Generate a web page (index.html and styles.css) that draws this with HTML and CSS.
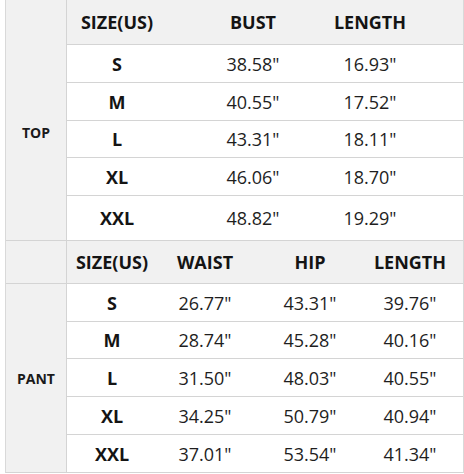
FILE: index.html
```html
<!DOCTYPE html>
<html>
<head>
<meta charset="utf-8">
<link rel="stylesheet" href="styles.css">
</head>
<body>
<div class="chart">
  <section class="sec">
    <div class="side side-top"><span class="side-label">TOP</span></div>
    <div class="rows">
      <div class="row top-cols head h45"><span>SIZE(US)</span><span>BUST</span><span>LENGTH</span></div>
      <div class="row top-cols h38"><span class="b">S</span><span>38.58"</span><span>16.93"</span></div>
      <div class="row top-cols h38"><span class="b">M</span><span>40.55"</span><span>17.52"</span></div>
      <div class="row top-cols h37"><span class="b">L</span><span>43.31"</span><span>18.11"</span></div>
      <div class="row top-cols h38"><span class="b">XL</span><span>46.06"</span><span>18.70"</span></div>
      <div class="row top-cols h44"><span class="b">XXL</span><span>48.82"</span><span>19.29"</span></div>
    </div>
  </section>
  <section class="sec">
    <div class="side side-pant">
      <div class="side-head"></div>
      <div class="side-body"><span class="side-label">PANT</span></div>
    </div>
    <div class="rows">
      <div class="row pant-cols head h43"><span>SIZE(US)</span><span>WAIST</span><span>HIP</span><span>LENGTH</span></div>
      <div class="row pant-cols h38"><span class="b">S</span><span>26.77"</span><span>43.31"</span><span>39.76"</span></div>
      <div class="row pant-cols h37"><span class="b">M</span><span>28.74"</span><span>45.28"</span><span>40.16"</span></div>
      <div class="row pant-cols h38"><span class="b">L</span><span>31.50"</span><span>48.03"</span><span>40.55"</span></div>
      <div class="row pant-cols h38"><span class="b">XL</span><span>34.25"</span><span>50.79"</span><span>40.94"</span></div>
      <div class="row pant-cols h37 last"><span class="b">XXL</span><span>37.01"</span><span>53.54"</span><span>41.34"</span></div>
    </div>
  </section>
</div>
</body>
</html>
```

FILE: styles.css
```css
html, body {
  margin: 0;
  padding: 0;
  background: #ffffff;
}

body {
  font-family: "Open Sans", "Noto Sans", sans-serif;
  color: #1e1e1e;
}

.chart {
  margin-left: 5px;
  width: 459px;
  box-sizing: border-box;
  border-left: 1px solid #d9d9d9;
  border-right: 1px solid #d9d9d9;
  border-bottom: 1px solid #d4d4d4;
}

.sec {
  display: flex;
  border-bottom: 1px solid #d4d4d4;
}

.sec:last-child {
  border-bottom: none;
}

.side {
  width: 61px;
  flex: none;
  box-sizing: border-box;
  background: #f1f1f1;
  border-right: 1px solid #d4d4d4;
}

.side-top {
  display: flex;
  align-items: center;
  justify-content: center;
  padding-top: 24px;
}

.side-pant {
  display: flex;
  flex-direction: column;
}

.side-head {
  height: 42px;
  border-bottom: 1px solid #d4d4d4;
}

.side-body {
  flex: 1;
  display: flex;
  align-items: center;
  justify-content: center;
}

.side-label {
  font-weight: 700;
  font-size: 14px;
  color: #1a1a1a;
}

.rows {
  flex: 1;
  display: flex;
  flex-direction: column;
}

.row {
  display: grid;
  box-sizing: border-box;
  border-bottom: 1px solid #d4d4d4;
  font-size: 18px;
}

.row.last,
.sec:first-child .row:last-child {
  border-bottom: none;
}

.row > span {
  display: flex;
  align-items: center;
  justify-content: center;
  white-space: nowrap;
}

.top-cols {
  grid-template-columns: 100px 172px 62px 1fr;
}

.pant-cols {
  grid-template-columns: 90px 96px 114px 86px 1fr;
}

.head {
  background: #f1f1f1;
  font-weight: 700;
  color: #141414;
}

.b {
  font-weight: 700;
  color: #141414;
}

.h45 { height: 45px; }
.h44 { height: 44px; }
.h43 { height: 43px; }
.h38 { height: 38px; }
.h37 { height: 37px; }
```
